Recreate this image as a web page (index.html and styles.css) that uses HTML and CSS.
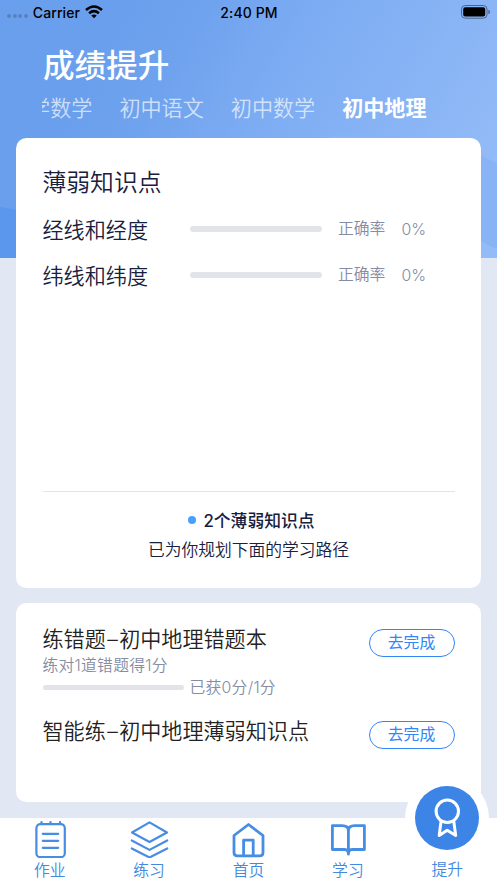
FILE: index.html
```html
<!DOCTYPE html>
<html lang="zh-CN">
<head>
<meta charset="utf-8">
<title>成绩提升</title>
<link rel="stylesheet" href="styles.css">
</head>
<body>
<div class="app">
  <svg class="backdrop" width="497" height="258" viewBox="0 0 497 258" aria-hidden="true">
    <defs>
      <linearGradient id="sky" gradientUnits="userSpaceOnUse" x1="80" y1="90" x2="430" y2="290">
        <stop offset="0" stop-color="#699fed"/>
        <stop offset=".18" stop-color="#70a3ee"/>
        <stop offset=".45" stop-color="#7eadf3"/>
        <stop offset="1" stop-color="#93bbf7"/>
      </linearGradient>
    </defs>
    <rect width="497" height="258" fill="url(#sky)"/>
    <path d="M0 207Q90 220 180 258H0Z" fill="#5b97ec"/>
    <path d="M330 136Q430 130 497 163V258H330Z" fill="#88b3f5"/>
    <path d="M470 236L497 249V258H470Z" fill="#93bbf7"/>
  </svg>

  <div class="status">
    <div class="carrier"><span class="dots"><i></i><i></i><i></i><i></i></span><span>Carrier</span>
      <svg width="18" height="14" viewBox="0 0 18 14" fill="none" stroke="#000" stroke-width="2.5"><path d="M1 5Q9-2 17 5M4.1 8.2Q9 4 13.9 8.2"/><path d="M9 13.2L6.3 10.5Q9 8.4 11.7 10.5Z" fill="#000" stroke="none"/></svg>
    </div>
    <div class="clock">2:40 PM</div>
    <svg class="battery" width="30" height="14" viewBox="0 0 30 14"><rect x=".5" y=".5" width="25.5" height="12.7" rx="3.7" fill="none" stroke="#48658f"/><rect x="2.2" y="2.2" width="22" height="9.3" rx="2" fill="#000"/><path d="M27.4 4.7Q29 5.2 29 6.9T27.4 9Z" fill="#48658f"/></svg>
  </div>

  <h1>成绩提升</h1>
  <div class="subjects"><div class="strip"><span>小学数学</span><span>初中语文</span><span>初中数学</span><span class="current">初中地理</span></div></div>

  <section class="card weak">
    <h2>薄弱知识点</h2>
    <div class="point"><span class="name">经线和经度</span><span class="track"></span><span class="rate">正确率</span><span class="pct">0%</span></div>
    <div class="point"><span class="name">纬线和纬度</span><span class="track"></span><span class="rate">正确率</span><span class="pct">0%</span></div>
    <div class="summary">
      <p class="count"><i></i>2个薄弱知识点</p>
      <p class="plan">已为你规划下面的学习路径</p>
    </div>
  </section>

  <section class="card tasks">
    <div class="task">
      <div class="detail">
        <h3>练错题<span class="dash">–</span>初中地理错题本</h3>
        <p>练对1道错题得1分</p>
        <div class="score"><span class="track"></span><span>已获0分/1分</span></div>
      </div>
      <button>去完成</button>
    </div>
    <div class="task">
      <div class="detail"><h3>智能练<span class="dash">–</span>初中地理薄弱知识点</h3></div>
      <button>去完成</button>
    </div>
  </section>

  <nav>
    <a><svg width="40" height="40" viewBox="0 0 40 40"><rect x="6.4" y="6.2" width="28.4" height="33" rx="4"/><path d="M11.5 4v2M20.5 4v2M30 4v2M12.8 15.8h15.4M12.8 22.8h15.4M12.8 29.8h15.4"/></svg><span>作业</span></a>
    <a><svg width="40" height="40" viewBox="0 0 40 40"><path d="M20.5 4.4L38 14.5 20.5 24 3 14.5Z"/><path d="M2.8 22.5L20.5 31.9 38.2 22.5M2.8 30.5L20.5 39.5 38.2 30.5"/></svg><span>练习</span></a>
    <a><svg class="bold" width="40" height="40" viewBox="0 0 40 40"><path d="M6 17.5L20.5 6.5 35 17.5V34.5Q35 37.8 31.7 37.8H9.3Q6 37.8 6 34.5Z"/><path d="M15.6 37.5V22.1H25.2V37.5"/></svg><span>首页</span></a>
    <a><svg class="bold" width="40" height="40" viewBox="0 0 40 40"><path d="M4.4 7.7H14Q20.4 7.7 20.4 12.7 20.4 7.7 26.7 7.7H36.4V31.5H24Q20.4 31.5 20.4 36.2 20.4 31.5 16.7 31.5H4.4ZM20.4 12V34"/></svg><span>学习</span></a>
    <a class="active"><div class="halo"><div class="disc"><svg width="64" height="64" viewBox="0 0 64 64"><circle cx="32.3" cy="25.3" r="11.2"/><path d="M26 35.5L24.2 49.5 32.2 44.2 40.7 49.5 38.8 35.5"/></svg></div></div><span>提升</span></a>
  </nav>
</div>
</body>
</html>
```
FILE: styles.css
```css
* { box-sizing: border-box; margin: 0; padding: 0; }
body { background: #e1e7f3; font-family: Inter, "Noto Sans CJK SC", sans-serif; font-weight: 350; color: #17203d; }
.app { position: relative; width: 497px; height: 883px; overflow: hidden; display: flex; flex-direction: column; isolation: isolate; }
.backdrop { position: absolute; inset: 0 auto auto 0; z-index: -1; }

.status { display: grid; grid-template-columns: 1fr auto 1fr; align-items: center; height: 24px; padding: 0 6px 0 7px; color: #000; font-size: 14px; font-weight: 500; letter-spacing: .1px; }
.carrier { display: flex; align-items: center; gap: 5px; }
.dots { display: flex; gap: 1.6px; padding-top: 8px; }
.dots i { width: 4px; height: 4px; border-radius: 50%; background: #5882bd; }
.battery { justify-self: end; }

h1 { height: 48px; margin: 18px 0 0 43px; color: #fff; font-size: 31.6px; line-height: 48px; font-weight: 500; }
.subjects { margin-left: 42px; width: 413px; height: 36px; overflow: hidden; }
.strip { display: flex; gap: 27px; margin-left: -34px; color: rgba(255,255,255,.68); font-size: 21.1px; line-height: 37px; white-space: nowrap; }
.strip span { flex: none; }
.strip .current { color: #fff; font-weight: 700; }

.card { margin: 0 16px; background: #fff; border-radius: 10.5px; padding: 0 26.5px; flex: none; }
.weak { height: 449.5px; margin-top: 12px; display: flex; flex-direction: column; }
h2 { margin-top: 27px; font-size: 23.8px; line-height: 36px; font-weight: 350; }
.weak h2 { margin-bottom: 5px; }
.point { display: flex; align-items: center; height: 46px; }
.name { width: 147.5px; font-size: 21.1px; }
.track { width: 132px; height: 5.5px; border-radius: 3px; background: #e2e4ea; }
.rate, .pct { font-size: 15.8px; color: #858ca3; }
.rate { width: 63.5px; margin-left: 16px; line-height: 22px; }
.pct { padding-top: 1px; }
.summary { margin-top: auto; height: 97px; border-top: 1.3px solid #e2e4ea; text-align: center; padding-top: 14px; }
.count { display: flex; justify-content: center; align-items: center; gap: 7px; height: 29px; font-size: 16.8px; font-weight: 500; padding-left: 6px; }
.count i { width: 8px; height: 8px; border-radius: 50%; background: #479fff; }
.plan { font-size: 16.75px; line-height: 30px; }

.tasks { height: 199px; margin-top: 15.5px; padding-top: 21px; }
.task { display: flex; justify-content: space-between; align-items: flex-start; height: 92px; }
h3 { font-size: 21.1px; line-height: 31px; font-weight: 350; color: #222; }
.dash { padding: 0 1.4px; }
.detail p, .score { font-size: 15.8px; line-height: 22px; color: #858ca3; letter-spacing: .25px; }
.score { display: flex; align-items: center; gap: 6px; }
.score .track { width: 141px; margin-bottom: 1px; }
button { margin-top: 5px; width: 86px; height: 28px; border: 1.5px solid #3186f8; border-radius: 14px; background: #fff; color: #3186f8; font: 400 15.8px/26px Inter, "Noto Sans CJK SC", sans-serif; }

nav { height: 65px; margin-top: auto; background: #fff; display: grid; grid-template-columns: repeat(5, 1fr); }
nav a { display: flex; flex-direction: column; align-items: center; color: #4389e0; font-size: 15.8px; line-height: 26px; }
nav svg { fill: none; stroke: #468de3; stroke-width: 2.2; stroke-linecap: round; stroke-linejoin: round; }
nav .bold { stroke-width: 2.8; }
nav .halo { margin-top: -42px; width: 84px; height: 84px; padding: 10px; border-radius: 50%; background: #fff; }
.disc { width: 64px; height: 64px; border-radius: 50%; background: #3d84e7; }
.disc svg { stroke: #fff; stroke-width: 3; display: block; }
.active span { margin-top: -3px; }
```
